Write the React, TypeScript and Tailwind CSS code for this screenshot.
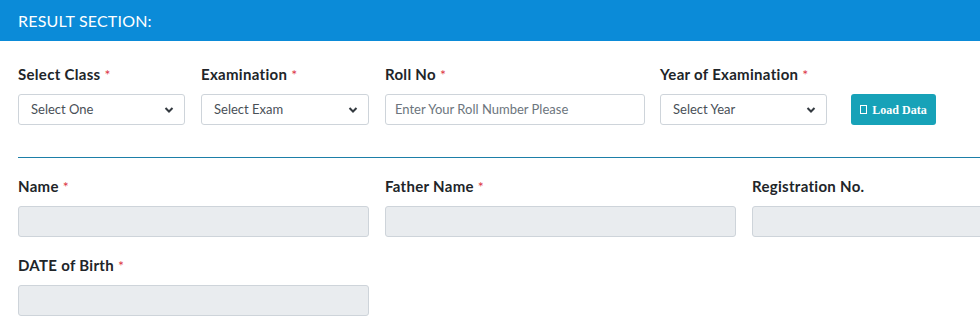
import React from 'react';

const font = { fontFamily: 'Lato, "Open Sans", sans-serif' };

function Label({ text, required }: { text: string; required?: boolean }) {
  return (
    <label className="block h-[20px] mb-[10px] text-[15px] font-bold text-[#212529] leading-[20px] tracking-[0.3px]">
      {text}
      {required && <span className="text-[#dc3545] font-normal ml-[4px] text-[14px]">*</span>}
    </label>
  );
}

function Select({ placeholder }: { placeholder: string }) {
  return (
    <div className="flex items-center justify-between h-[31px] px-[12px] border border-[#ced4da] rounded-[3px] bg-white text-[13px] text-[#495057]">
      <span>{placeholder}</span>
      <svg width="10" height="8" viewBox="0 0 10 8" className="mr-[-2px]">
        <path d="M1.5 2 L5 5.5 L8.5 2" fill="none" stroke="#343a40" strokeWidth="2" />
      </svg>
    </div>
  );
}

function ReadOnly() {
  return <div className="h-[31px] border border-[#ced4da] rounded-[3px] bg-[#e9ecef]" />;
}

export default function App() {
  return (
    <div className="w-[980px] h-[333px] overflow-hidden bg-white" style={font}>
      <div className="h-[41px] bg-[#0b8bd8] flex items-center px-[18px]">
        <span className="text-white text-[16px] tracking-[0.2px]">RESULT SECTION:</span>
      </div>
      <div className="w-[1100px] pl-[18px] pt-[23px]">
        <div className="flex items-start">
          <div className="w-[167px] mr-[16px]">
            <Label text="Select Class" required />
            <Select placeholder="Select One" />
          </div>
          <div className="w-[168px] mr-[16px]">
            <Label text="Examination" required />
            <Select placeholder="Select Exam" />
          </div>
          <div className="w-[260px] mr-[15px]">
            <Label text="Roll No" required />
            <div className="flex items-center h-[31px] px-[9px] border border-[#ced4da] rounded-[3px] bg-white text-[13px] text-[#6c757d]">
              Enter Your Roll Number Please
            </div>
          </div>
          <div className="w-[167px] mr-[24px]">
            <Label text="Year of Examination" required />
            <Select placeholder="Select Year" />
          </div>
          <div className="pt-[30px]">
            <button
              className="flex items-center h-[31px] w-[85px] justify-center rounded-[3px] bg-[#17a2b8] text-white text-[12px] font-bold"
              style={{ fontFamily: '"Liberation Serif", serif' }}
            >
              <span className="inline-block w-[7px] h-[9px] border border-white mr-[5px]" />
              Load Data
            </button>
          </div>
        </div>
        <div className="mt-[32px] border-t border-[#1d7fa8]" />
        <div className="grid grid-cols-[351px_351px_351px] gap-x-[16px] pt-[18px]">
          <div>
            <Label text="Name" required />
            <ReadOnly />
          </div>
          <div>
            <Label text="Father Name" required />
            <ReadOnly />
          </div>
          <div>
            <Label text="Registration No." />
            <ReadOnly />
          </div>
          <div className="mt-[18px]">
            <Label text="DATE of Birth" required />
            <ReadOnly />
          </div>
        </div>
      </div>
    </div>
  );
}
